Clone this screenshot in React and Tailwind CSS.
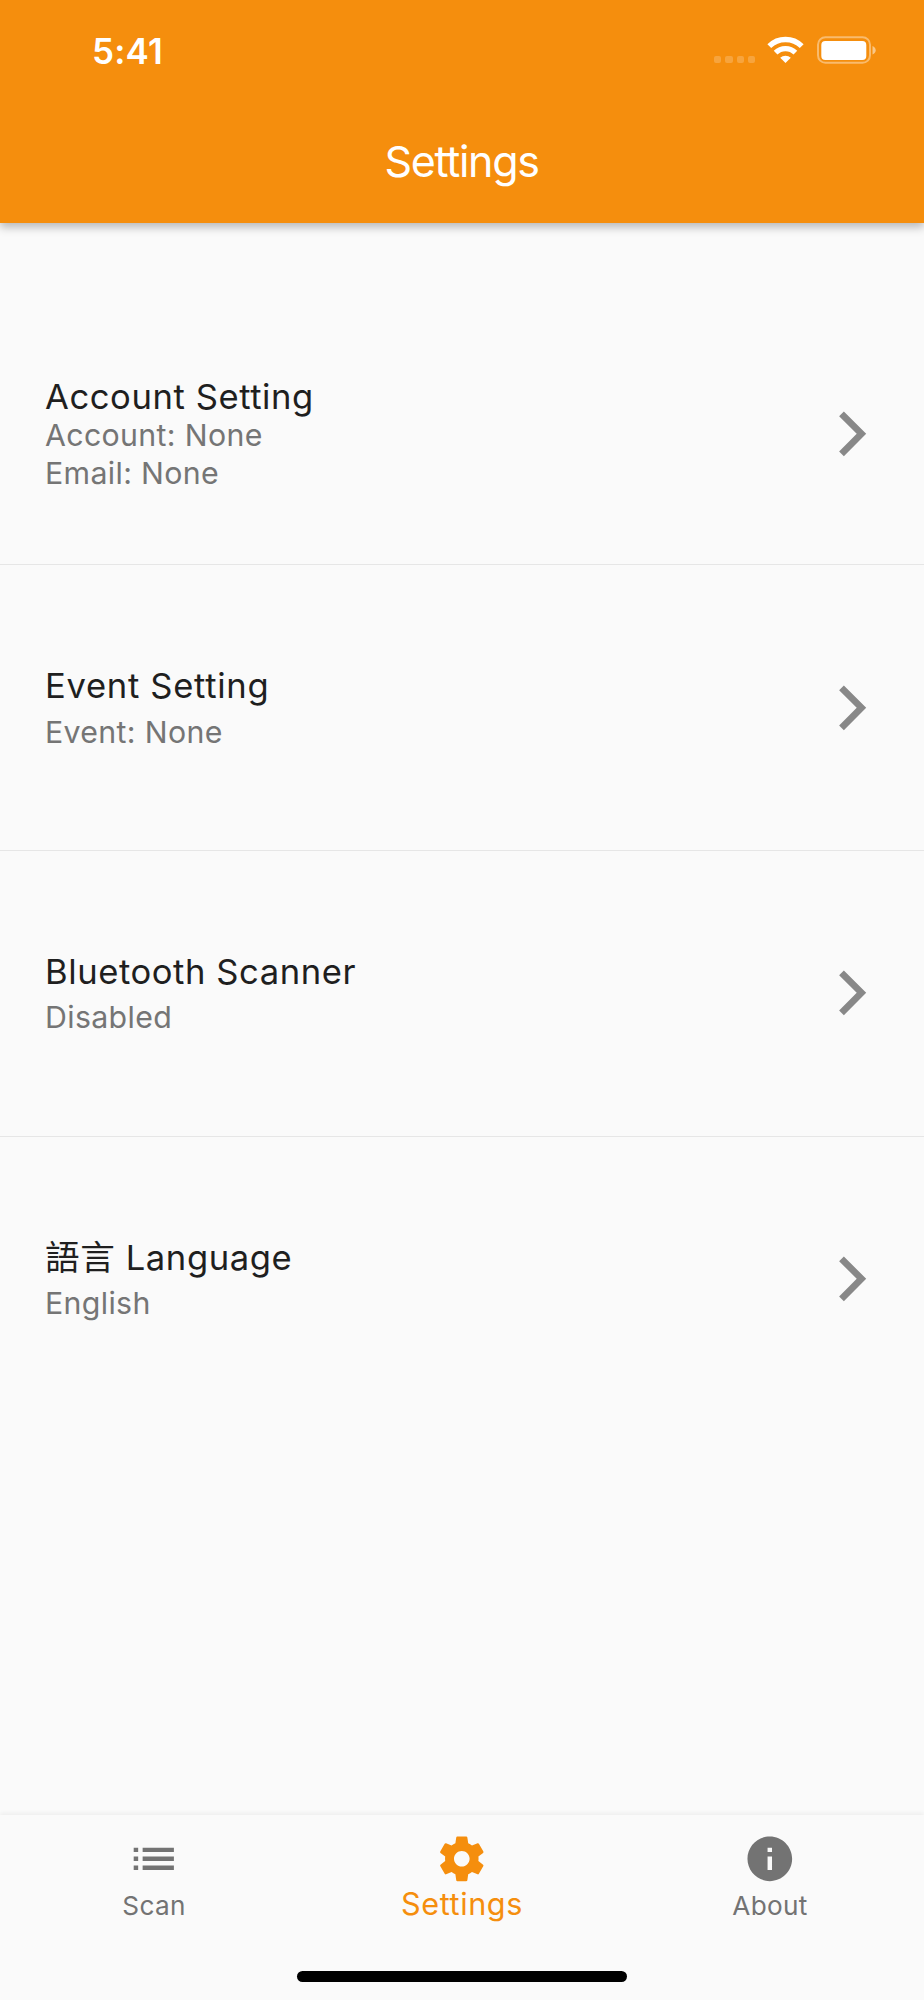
import React from 'react'
import { MdList, MdInfo } from 'react-icons/md'

const items = [
  { title: 'Account Setting', lines: ['Account: None', 'Email: None'], row: 'h-[342px] pt-[152px]', gap: '-mt-px', track: 'tracking-[0.58px]' },
  { title: 'Event Setting', lines: ['Event: None'], row: 'h-[286px] pt-[99px]', gap: 'mt-[7px]', track: 'tracking-[0.7px]' },
  { title: 'Bluetooth Scanner', lines: ['Disabled'], row: 'h-[286px] pt-[99px]', gap: 'mt-[6px]', track: 'tracking-[0.58px]' },
  { title: '語言 Language', lines: ['English'], row: 'h-[286px] pt-[99px]', gap: 'mt-[6px]', track: 'tracking-[0.6px]' },
]

function GearIcon() {
  return (
    <svg viewBox="0 0 24 24" className="size-[53.6px]" fill="currentColor">
      <path d="M19.43 12.98c.04-.32.07-.64.07-.98s-.03-.66-.07-.98l2.11-1.65c.19-.15.24-.42.12-.64l-2-3.46c-.12-.22-.39-.3-.61-.22l-2.49 1c-.52-.4-1.08-.73-1.69-.98l-.38-2.65C14.46 2.18 14.25 2 14 2h-4c-.25 0-.46.18-.49.42l-.38 2.65c-.61.25-1.17.59-1.69.98l-2.49-1c-.23-.09-.49 0-.61.22l-2 3.46c-.13.22-.07.49.12.64l2.11 1.65c-.04.32-.07.65-.07.98s.03.66.07.98l-2.11 1.65c-.19.15-.24.42-.12.64l2 3.46c.12.22.39.3.61.22l2.49-1c.52.4 1.08.73 1.69.98l.38 2.65c.03.24.24.42.49.42h4c.25 0 .46-.18.49-.42l.38-2.65c.61-.25 1.17-.59 1.69-.98l2.49 1c.23.09.49 0 .61-.22l2-3.46c.12-.22.07-.49-.12-.64l-2.11-1.65zM12 15.5c-1.93 0-3.5-1.57-3.5-3.5s1.57-3.5 3.5-3.5 3.5 1.57 3.5 3.5-1.57 3.5-3.5 3.5z" />
    </svg>
  )
}

function StatusBar() {
  return (
    <div className="flex h-[98px] items-start pl-[92px] pr-[48px] text-white">
      <span className="mt-[30px] text-[35px] leading-[42px] font-semibold tracking-[0.2px]">5:41</span>
      <div className="mt-[36px] ml-auto flex items-start">
        <div className="mt-[20px] flex gap-[4px]">
          {[0, 1, 2, 3].map(i => (
            <span key={i} className="h-[7px] w-[7.2px] rounded-[2px] bg-white/20" />
          ))}
        </div>
        <svg viewBox="0 0 37 27" className="ml-[12px] h-[27px] w-[37px]" fill="none" stroke="white">
          <path d="M2.3 10.2a23 23 0 0 1 32.4 0" strokeWidth="5.4" />
          <path d="M8.6 16.7a14 14 0 0 1 19.8 0" strokeWidth="5.2" />
          <path d="M13.2 21.8a7.6 7.6 0 0 1 10.6 0L18.5 27z" fill="white" stroke="none" />
        </svg>
        <svg viewBox="0 0 60 28" className="ml-[12px] h-[28px] w-[60px]" fill="none">
          <rect x="2" y="1.2" width="52" height="25.6" rx="7.5" stroke="white" strokeOpacity=".4" strokeWidth="2" />
          <rect x="5.3" y="5" width="45" height="19" rx="4" fill="white" />
          <path d="M56.5 10c2 .8 3.2 2.3 3.2 4.3s-1.2 3.5-3.2 4.3z" fill="white" fillOpacity=".5" />
        </svg>
      </div>
    </div>
  )
}

export default function App() {
  return (
    <div className="flex h-[2000px] w-[924px] flex-col overflow-hidden bg-[#fafafa] font-['Inter','Noto_Sans_CJK_TC',sans-serif]">
      <header className="relative z-10 h-[223px] shrink-0 bg-[#f58e0d] shadow-[0_4px_9px_rgba(0,0,0,0.28)]">
        <StatusBar />
        <h1 className="mt-[35px] pr-px text-center text-[43px] leading-[56px] tracking-[-1.3px] text-white">Settings</h1>
      </header>

      <main className="flex-1">
        {items.map((item, i) => (
          <div key={item.title} className={`${item.row} ${i < items.length - 1 ? 'border-b border-[#e6e6e6]' : ''} pr-[44.5px] pl-[45px]`}>
            <div className="flex items-center justify-between">
              <div>
                <div className={`text-[34.6px] leading-[42px] text-[#1f1f1f] ${item.track}`}>{item.title}</div>
                <div className={`text-[30.3px] leading-[38.3px] tracking-[0.34px] text-[#757575] ${item.gap}`}>
                  {item.lines.map(line => <div key={line}>{line}</div>)}
                </div>
              </div>
              <svg viewBox="0 0 24 24" className="size-[53.6px]" fill="#888888">
                <path d="M5.88 4.12 13.76 12l-7.88 7.88L8 22l10-10L8 2z" />
              </svg>
            </div>
          </div>
        ))}
      </main>

      <nav className="flex h-[185px] shrink-0 flex-col shadow-[0_-2px_4px_rgba(0,0,0,0.05)]">
        <div className="grid h-[156px] grid-cols-3 pt-[17px] text-[#737373]">
          <div className="flex flex-col items-center">
            <MdList className="size-[53.6px]" />
            <span className="mt-[3px] text-[26.2px] leading-[34px] tracking-[0.3px]">Scan</span>
          </div>
          <div className="flex flex-col items-center text-[#f58e0d]">
            <GearIcon />
            <span className="text-[30.6px] leading-[36px] tracking-[0.6px]">Settings</span>
          </div>
          <div className="flex flex-col items-center">
            <MdInfo className="size-[53.6px]" />
            <span className="mt-[3px] text-[26.2px] leading-[34px] tracking-[0.3px]">About</span>
          </div>
        </div>
        <div className="mx-auto h-[11px] w-[330px] rounded-full bg-black" />
      </nav>
    </div>
  )
}
